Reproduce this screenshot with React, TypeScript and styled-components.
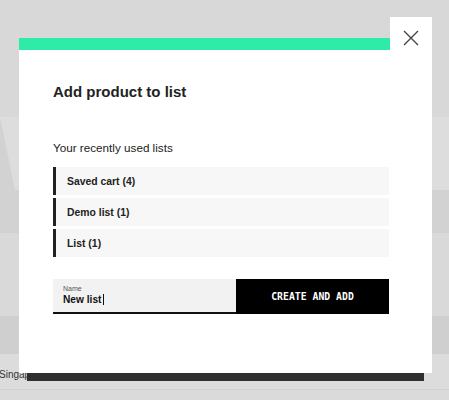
import styled, { createGlobalStyle } from 'styled-components'

const GlobalStyle = createGlobalStyle`
  html, body {
    margin: 0;
    padding: 0;
    background: #d9d9d9;
    font-family: 'Liberation Sans', Arial, sans-serif;
  }
`

const lists = [
  { name: 'Saved cart', count: 4 },
  { name: 'Demo list', count: 1 },
  { name: 'List', count: 1 },
]

const Page = styled.div`
  position: relative;
  width: 449px;
  height: 400px;
  overflow: hidden;
  display: flex;
  flex-direction: column;
  background: #d9d9d9;
`

const TopArea = styled.div`
  height: 117px;
  background: #d8d8d8;
`

const Hero = styled.div`
  height: 116px;
  background: #d2d2d2;

  &::before {
    content: '';
    display: block;
    height: 73px;
    background: #dddddd;
    clip-path: polygon(0 0, 100% 0, 100% 100%, 15px 100%);
  }
`

const HeroLower = styled.div`
  height: 83px;
  background: #d9d9d9;
`

const NavBand = styled.div`
  height: 38px;
  background: #cfcfcf;
`

const Footer = styled.div`
  position: relative;
  height: 35px;
  display: flex;
  align-items: center;
  background: #dcdcdc;
  border-bottom: 1px solid #d0d0d0;
`

const FooterText = styled.span`
  margin-left: -1px;
  margin-top: 6px;
  font-size: 10px;
  color: #333;
`

const FooterBar = styled.div`
  position: absolute;
  left: 27px;
  top: 19px;
  width: 397px;
  height: 8px;
  background: #2f2f2f;
`

const Bottom = styled.div`
  flex: 1;
  background: #dadada;
`

const Modal = styled.div`
  position: absolute;
  left: 19px;
  top: 17px;
  width: 413px;
  display: flex;
  flex-direction: column;
`

const ModalHead = styled.div`
  display: flex;
  align-items: flex-end;
  height: 33px;
`

const Accent = styled.div`
  flex: 1;
  height: 12px;
  background: #2eeba8;
`

const CloseButton = styled.button`
  width: 42px;
  height: 33px;
  border: 0;
  padding: 13px 0 0 13px;
  display: flex;
  align-items: flex-start;
  background: #fff;
  cursor: pointer;
`

const ModalBody = styled.div`
  background: #fff;
  padding: 33px 43px 59px 34px;
`

const Title = styled.h2`
  margin: 0;
  font-size: 15px;
  line-height: 18px;
  font-weight: 700;
  color: #222;
`

const Subtitle = styled.p`
  margin: 40px 0 0;
  font-size: 11.7px;
  line-height: 14px;
  color: #222;
`

const ListStack = styled.ul`
  list-style: none;
  margin: 12px 0 0;
  padding: 0;
  display: flex;
  flex-direction: column;
  gap: 3px;
`

const ListItem = styled.li`
  height: 28px;
  display: flex;
  align-items: center;
  padding-left: 11px;
  border-left: 3px solid #222;
  background: #f7f7f7;
  font-size: 10.4px;
  font-weight: 700;
  color: #222;
  cursor: pointer;
`

const CreateForm = styled.div`
  margin-top: 22px;
  display: grid;
  grid-template-columns: 183px 1fr;
  height: 35px;
`

const Field = styled.div`
  display: flex;
  flex-direction: column;
  padding: 5px 10px 6px;
  background: #f2f2f2;
  border-bottom: 2px solid #111;
`

const FieldLabel = styled.span`
  font-size: 7px;
  line-height: 9px;
  color: #555;
`

const FieldValue = styled.span`
  display: flex;
  align-items: center;
  font-size: 10.2px;
  line-height: 13px;
  font-weight: 700;
  color: #111;
`

const Caret = styled.span`
  width: 1px;
  height: 11px;
  margin-left: 1px;
  background: #111;
`

const SubmitButton = styled.button`
  border: 0;
  background: #000;
  color: #fff;
  font-family: 'DejaVu Sans Mono', 'Liberation Mono', monospace;
  font-size: 9.8px;
  font-weight: 700;
  cursor: pointer;
`

const CloseIcon = () => (
  <svg width='16' height='16' viewBox='0 0 16 16'>
    <path d='M1 1 L15 15 M15 1 L1 15' stroke='#444' strokeWidth='1.4' fill='none' />
  </svg>
)

export default function App() {
  return (
    <>
      <GlobalStyle />
      <Page>
        <TopArea />
        <Hero />
        <HeroLower />
        <NavBand />
        <Footer>
          <FooterText>Singapore</FooterText>
          <FooterBar />
        </Footer>
        <Bottom />

        <Modal role='dialog'>
          <ModalHead>
            <Accent />
            <CloseButton aria-label='Close'>
              <CloseIcon />
            </CloseButton>
          </ModalHead>
          <ModalBody>
            <Title>Add product to list</Title>
            <Subtitle>Your recently used lists</Subtitle>
            <ListStack>
              {lists.map((list) => (
                <ListItem key={list.name}>
                  {list.name} ({list.count})
                </ListItem>
              ))}
            </ListStack>
            <CreateForm>
              <Field>
                <FieldLabel>Name</FieldLabel>
                <FieldValue>
                  New list
                  <Caret />
                </FieldValue>
              </Field>
              <SubmitButton>CREATE AND ADD</SubmitButton>
            </CreateForm>
          </ModalBody>
        </Modal>
      </Page>
    </>
  )
}
